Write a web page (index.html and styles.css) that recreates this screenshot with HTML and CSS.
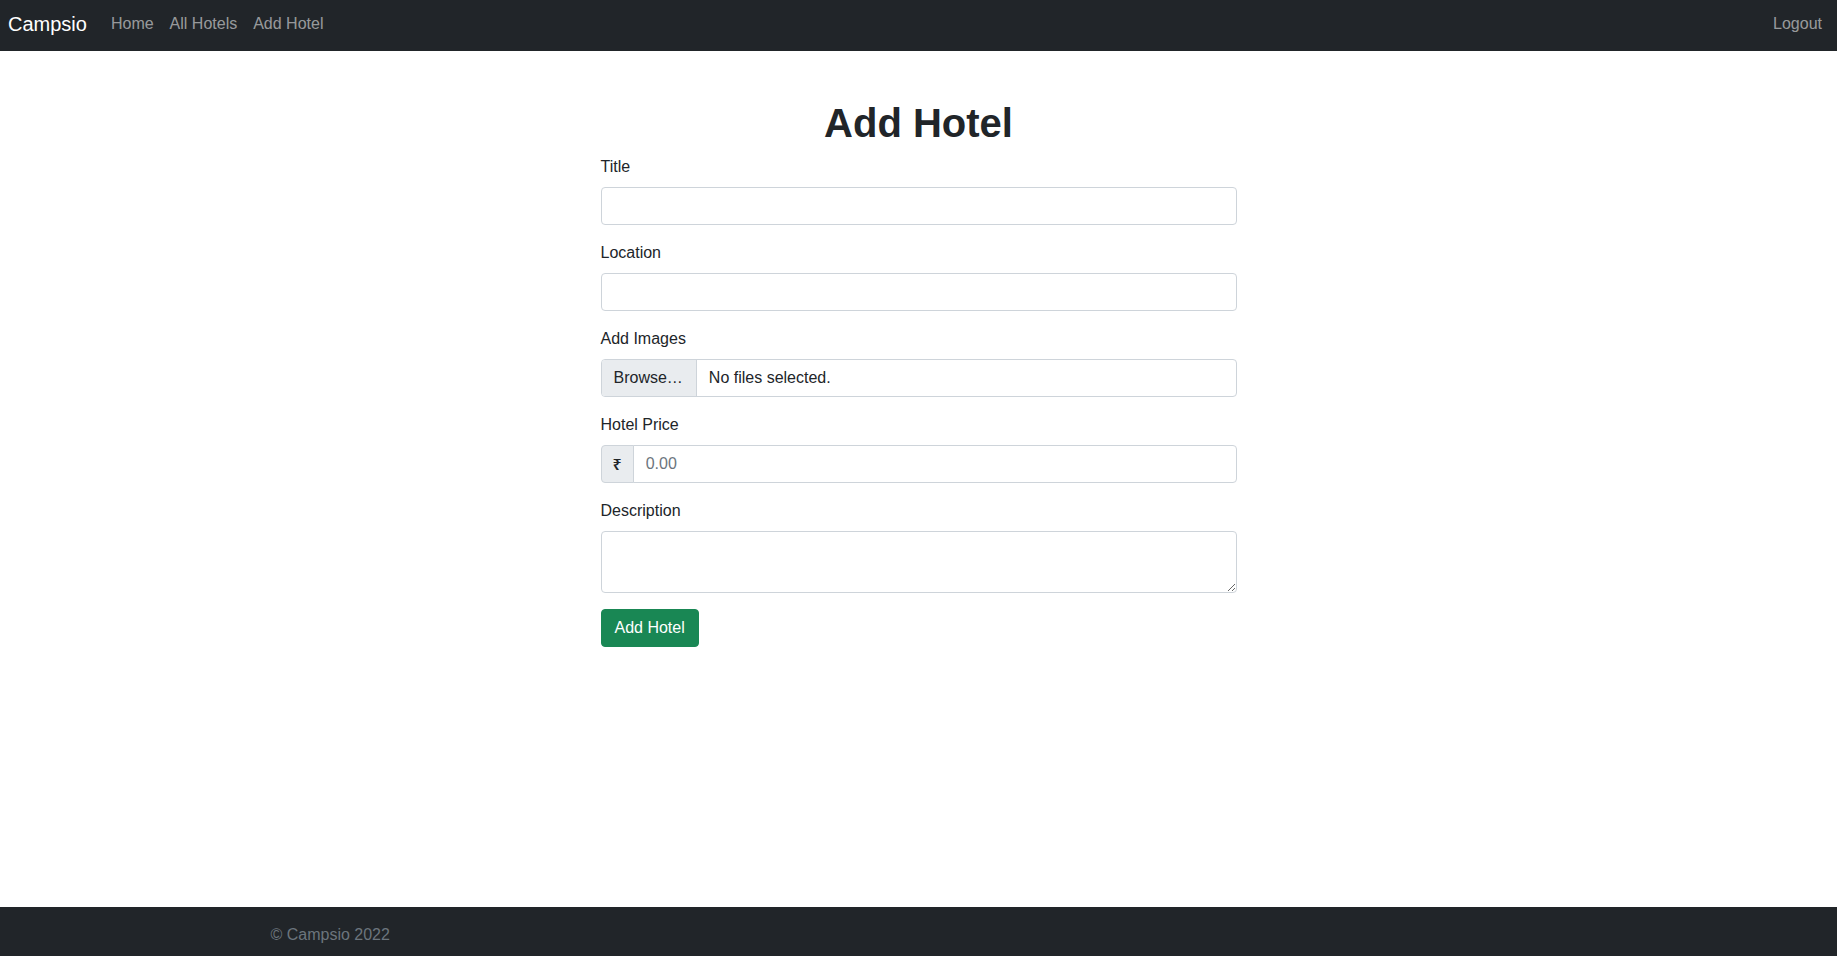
FILE: index.html
```html
<!DOCTYPE html>
<html lang="en">
<head>
<meta charset="utf-8">
<title>Campsio - Add Hotel</title>
<link rel="stylesheet" href="styles.css">
</head>
<body>
<header class="navbar">
  <a class="brand" href="#">Campsio</a>
  <nav class="nav-links">
    <a class="nav-link" href="#">Home</a>
    <a class="nav-link" href="#">All Hotels</a>
    <a class="nav-link" href="#">Add Hotel</a>
  </nav>
  <nav class="nav-right">
    <a class="nav-link" href="#">Logout</a>
  </nav>
</header>

<main class="container main">
  <div class="row">
    <div class="col">
      <h1 class="title">Add Hotel</h1>
      <form class="form">
        <div class="group">
          <label class="form-label" for="title">Title</label>
          <input class="form-control" type="text" id="title">
        </div>
        <div class="group">
          <label class="form-label" for="location">Location</label>
          <input class="form-control" type="text" id="location">
        </div>
        <div class="group">
          <label class="form-label">Add Images</label>
          <div class="file-input">
            <span class="file-btn">Browse…</span>
            <span class="file-text">No files selected.</span>
          </div>
        </div>
        <div class="group">
          <label class="form-label" for="price">Hotel Price</label>
          <div class="input-group">
            <span class="addon">₹</span>
            <input class="form-control grouped" type="text" id="price" placeholder="0.00">
          </div>
        </div>
        <div class="group">
          <label class="form-label" for="desc">Description</label>
          <textarea class="form-control textarea" id="desc" rows="2"></textarea>
        </div>
        <button class="btn-success" type="button">Add Hotel</button>
      </form>
    </div>
  </div>
</main>

<footer class="footer">
  <div class="container">
    <span class="muted">© Campsio 2022</span>
  </div>
</footer>
</body>
</html>
```
FILE: styles.css
```css
* { box-sizing: border-box; }

html, body { height: 100%; }

body {
  margin: 0;
  font-family: "Liberation Sans", Arial, "Noto Sans", sans-serif;
  font-size: 16px;
  line-height: 1.5;
  color: #212529;
  background: #fff;
  display: flex;
  flex-direction: column;
  min-height: 100vh;
}

a { text-decoration: none; }

.navbar {
  height: 51px;
  flex: 0 0 auto;
  background: #212529;
  display: flex;
  align-items: center;
  padding: 0 7px 4px 8px;
}

.brand {
  color: #fff;
  font-size: 20px;
  line-height: 30px;
  margin-right: 16px;
}

.nav-links { display: flex; }
.nav-right { margin-left: auto; display: flex; }

.nav-link {
  color: rgba(255, 255, 255, 0.55);
  padding: 8px;
  line-height: 24px;
}

.container {
  width: 100%;
  max-width: 1320px;
  margin: 0 auto;
  padding: 0 12px;
}

.main { margin-top: 48px; }

.row {
  display: flex;
  margin: 0 -12px;
}

.col {
  flex: 0 0 50%;
  max-width: 50%;
  margin-left: 25%;
  padding: 0 12px;
}

.title {
  text-align: center;
  font-size: 40px;
  font-weight: 700;
  line-height: 1.2;
  margin: 0 0 8px;
}

.form { margin: 0; }

.group { margin-bottom: 16px; }

.form-label {
  display: inline-block;
  margin-bottom: 8px;
}

.form-control {
  display: block;
  width: 100%;
  height: 38px;
  padding: 6px 12px;
  font-family: inherit;
  font-size: 16px;
  line-height: 24px;
  color: #212529;
  background: #fff;
  border: 1px solid #ced4da;
  border-radius: 4px;
  outline: none;
}

.form-control::placeholder { color: #6c757d; }

.textarea {
  height: 62px;
  resize: vertical;
}

.file-input {
  display: flex;
  height: 38px;
  border: 1px solid #ced4da;
  border-radius: 4px;
  overflow: hidden;
}

.file-btn {
  background: #e9ecef;
  padding: 6px 13px 6px 12px;
  border-right: 1px solid #ced4da;
  line-height: 24px;
}

.file-text {
  padding: 6px 12px;
  line-height: 24px;
}

.input-group { display: flex; }

.addon {
  display: flex;
  align-items: center;
  padding: 6px 11px;
  background: #e9ecef;
  border: 1px solid #ced4da;
  border-radius: 4px 0 0 4px;
  font-family: "Noto Sans", "DejaVu Sans", sans-serif;
  font-size: 16px;
  font-weight: 600;
  line-height: 24px;
}

.grouped {
  flex: 1 1 auto;
  width: auto;
  margin-left: -1px;
  border-radius: 0 4px 4px 0;
}

.btn-success {
  font-family: inherit;
  font-size: 16px;
  line-height: 24px;
  padding: 6px 13px;
  color: #fff;
  background: #198754;
  border: 1px solid #198754;
  border-radius: 4px;
  cursor: pointer;
}

.footer {
  margin-top: auto;
  flex: 0 0 auto;
  background: #212529;
  padding: 16px 0 9px;
}

.muted {
  color: #6c757d;
  line-height: 24px;
}
```
